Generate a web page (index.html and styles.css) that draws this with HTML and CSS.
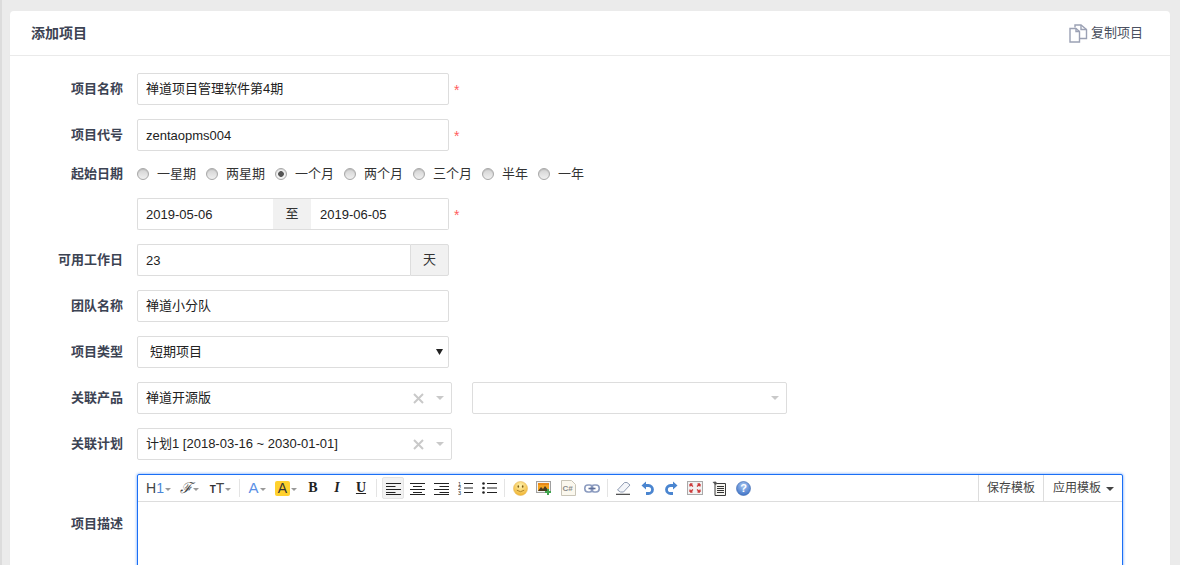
FILE: index.html
```html
<!DOCTYPE html>
<html lang="zh-CN">
<head>
<meta charset="utf-8">
<title>添加项目</title>
<link rel="stylesheet" href="styles.css">
</head>
<body>
<main class="card">
  <header class="card-head">
    <h2 class="card-title">添加项目</h2>
    <a class="copy-link" href="#">
      <svg class="copy-icon" width="19" height="19" viewBox="0 0 19 19" fill="none" stroke="#9ba1b4" stroke-width="1.400"><path d="M6 3.500V1h6l5.500 4.500v9H11"/><path d="M12 1v4.500h5.500"/><path d="M1 4.500h6l3.500 3v10.500H1z" fill="#fff"/><path d="M7 4.500v3h3.500"/></svg>
      <span>复制项目</span>
    </a>
  </header>
  <form class="form">
    <div class="row">
      <label class="label">项目名称</label>
      <input class="input input-cjk w312" type="text" value="禅道项目管理软件第4期">
      <span class="req">*</span>
    </div>
    <div class="row">
      <label class="label">项目代号</label>
      <input class="input w312" type="text" value="zentaopms004">
      <span class="req">*</span>
    </div>
    <div class="row row-radio">
      <label class="label">起始日期</label>
      <div class="radios">
        <label class="radio"><input type="radio" name="d"><span>一星期</span></label>
        <label class="radio"><input type="radio" name="d"><span>两星期</span></label>
        <label class="radio"><input type="radio" name="d" checked><span>一个月</span></label>
        <label class="radio"><input type="radio" name="d"><span>两个月</span></label>
        <label class="radio"><input type="radio" name="d"><span>三个月</span></label>
        <label class="radio"><input type="radio" name="d"><span>半年</span></label>
        <label class="radio"><input type="radio" name="d"><span>一年</span></label>
      </div>
    </div>
    <div class="row">
      <span class="label"></span>
      <div class="group w312">
        <input class="input grow" type="text" value="2019-05-06">
        <span class="addon date-addon">至</span>
        <input class="input grow" type="text" value="2019-06-05">
      </div>
      <span class="req">*</span>
    </div>
    <div class="row">
      <label class="label">可用工作日</label>
      <div class="group w312">
        <input class="input grow" type="text" value="23">
        <span class="addon day-addon">天</span>
      </div>
    </div>
    <div class="row">
      <label class="label">团队名称</label>
      <input class="input input-cjk w312" type="text" value="禅道小分队">
    </div>
    <div class="row">
      <label class="label">项目类型</label>
      <div class="select-wrap w312">
        <select class="select"><option>短期项目</option></select>
        <svg class="select-arrow" width="7" height="7" viewBox="0 0 7 7"><path d="M0 1h7L3.500 7z" fill="#222"/></svg>
      </div>
    </div>
    <div class="row">
      <label class="label">关联产品</label>
      <div class="chosen">
        <span class="chosen-text">禅道开源版</span>
        <svg class="chosen-x" width="11" height="11" viewBox="0 0 11 11" stroke="#c9c9c9" stroke-width="2"><path d="M1 1l9 9M10 1l-9 9"/></svg>
        <span class="chosen-caret"></span>
      </div>
      <div class="chosen chosen-second">
        <span class="chosen-text"></span>
        <span class="chosen-caret"></span>
      </div>
    </div>
    <div class="row">
      <label class="label">关联计划</label>
      <div class="chosen">
        <span class="chosen-text">计划1 [2018-03-16 ~ 2030-01-01]</span>
        <svg class="chosen-x" width="11" height="11" viewBox="0 0 11 11" stroke="#c9c9c9" stroke-width="2"><path d="M1 1l9 9M10 1l-9 9"/></svg>
        <span class="chosen-caret"></span>
      </div>
    </div>
    <div class="row">
      <label class="label">项目描述</label>
      <div class="editor">
        <div class="toolbar">
          <span class="tb tb-31"><span class="t-h">H<span class="t-blue">1</span></span><i class="drop"></i></span>
          <span class="tb tb-31"><span class="t-f">ℱ</span><i class="drop"></i></span>
          <span class="tb tb-31"><span class="t-small">T</span><span class="t-big">T</span><i class="drop"></i></span>
          <span class="sep"></span>
          <span class="tb tb-28"><span class="t-a">A</span><i class="drop"></i></span>
          <span class="tb tb-30"><span class="t-hl">A</span><i class="drop"></i></span>
          <span class="tb t-b">B</span>
          <span class="tb t-i">I</span>
          <span class="tb t-u">U</span>
          <span class="sep sep-after"></span>
          <span class="tb active"><svg width="15" height="13" viewBox="0 0 15 13" stroke="#222" stroke-width="1.100"><path d="M0 1.500h15M0 4.500h9.500M0 7.500h15M0 10.500h9.500M0 12.500h15" /></svg></span>
          <span class="tb"><svg width="15" height="13" viewBox="0 0 15 13" stroke="#222" stroke-width="1.100"><path d="M0 1.500h15M3 4.500h9M0 7.500h15M3 10.500h9M0 12.500h15"/></svg></span>
          <span class="tb"><svg width="15" height="13" viewBox="0 0 15 13" stroke="#222" stroke-width="1.100"><path d="M0 1.500h15M5.500 4.500H15M0 7.500h15M5.500 10.500H15M0 12.500h15"/></svg></span>
          <span class="tb"><svg width="15" height="14" viewBox="0 0 15 14" stroke="#222" stroke-width="1.100" fill="#222"><path d="M6 2.500h9M6 7h9M6 11.500h9"/><text x="0" y="4.500" class="ol-num">1</text><text x="0" y="9" class="ol-num">2</text><text x="0" y="13.500" class="ol-num">3</text></svg></span>
          <span class="tb"><svg width="15" height="12" viewBox="0 0 15 12" stroke="#222" stroke-width="1.100"><path d="M5 1.500h10M5 6h10M5 10.500h10"/><g fill="#222" stroke="none"><circle cx="1.500" cy="1.500" r="1.300"/><circle cx="1.500" cy="6" r="1.300"/><circle cx="1.500" cy="10.500" r="1.300"/></g></svg></span>
          <span class="sep"></span>
          <span class="tb"><svg width="15" height="15" viewBox="0 0 15 15"><defs><radialGradient id="sm" cx="50%" cy="30%" r="70%"><stop offset="0" stop-color="#fff3b0"/><stop offset="1" stop-color="#f0b32e"/></radialGradient></defs><circle cx="7.500" cy="7.500" r="7" fill="url(#sm)" stroke="#e8bb5e" stroke-width=".6"/><ellipse cx="5.300" cy="5.500" rx=".8" ry="1.300" fill="#7a5a16"/><ellipse cx="9.700" cy="5.500" rx=".8" ry="1.300" fill="#7a5a16"/><path d="M3.800 9.200q3.700 3 7.400 0" fill="none" stroke="#a87c22" stroke-width=".9"/></svg></span>
          <span class="tb"><svg width="16" height="15" viewBox="0 0 16 15"><rect x=".5" y=".5" width="14" height="11" fill="#f3f3f3" stroke="#a0a0a0"/><rect x="2" y="2" width="11" height="8" fill="#f4a321"/><path d="M2 10l3-4 2 2 2-3 4 5z" fill="#4a3a20"/><rect x="2" y="2" width="11" height="2" fill="#e8891a"/><path d="M12 8v6M9 11h6" stroke="#3fa34d" stroke-width="2"/></svg></span>
          <span class="tb"><svg width="15" height="16" viewBox="0 0 15 16"><path d="M.5.500h10l4 4v11H.5z" fill="#fbf8ee" stroke="#c9c5b8"/><text x="1.500" y="11" class="code-mark">C#</text></svg></span>
          <span class="tb"><svg width="16" height="9" viewBox="0 0 16 9" fill="none" stroke="#8c9cc0" stroke-width="1.600"><rect x=".8" y="1" width="8" height="7" rx="3.200"/><rect x="7.200" y="1" width="8" height="7" rx="3.200"/><path d="M4.500 4.500h7" stroke="#5e6f99"/></svg></span>
          <span class="sep"></span>
          <span class="tb"><svg width="15" height="14" viewBox="0 0 15 14"><path d="M1.500 9l7-7.500h2.500l3 2.500-6.500 7H4.500z" fill="#f4f6fa" stroke="#8f9bb2"/><path d="M0 13.300h14" stroke="#333" stroke-width="1.100"/></svg></span>
          <span class="tb"><svg width="13" height="14" viewBox="0 0 13 14" fill="none"><path d="M5 .500L.5 4.500 5 8.500z" fill="#4a85d0"/><path d="M3 4.500h4.500a3.700 3.700 0 0 1 0 8H5" stroke="#4a85d0" stroke-width="2.800"/></svg></span>
          <span class="tb"><svg width="13" height="14" viewBox="0 0 13 14" fill="none"><path d="M8 .500l4.500 4L8 8.500z" fill="#4a85d0"/><path d="M10 4.500H5.500a3.700 3.700 0 0 0 0 8H8" stroke="#4a85d0" stroke-width="2.800"/></svg></span>
          <span class="tb"><svg width="16" height="14" viewBox="0 0 16 14"><rect x=".5" y=".5" width="15" height="13" fill="#f2f2f2" stroke="#a9a9a9"/><path d="M3 3l3 2.600M3 3v2.500M3 3h2.500M13 3l-3 2.600M13 3v2.500M13 3h-2.500M3 11l3-2.600M3 11V8.500M3 11h2.500M13 11l-3-2.600M13 11V8.500M13 11h-2.500" stroke="#cc3a3a" stroke-width="1.300" fill="none"/></svg></span>
          <span class="tb"><svg width="14" height="15" viewBox="0 0 14 15"><path d="M3 2.500h10.500v12H3z" fill="#f6f5f0" stroke="#3a3a3a"/><path d="M.5 1L3.500.5l2 2-2 1.500z" fill="#555"/><path d="M5 5.500h7M5 7.500h7M5 9.500h7M5 11.500h7" stroke="#333"/></svg></span>
          <span class="tb"><svg width="15" height="15" viewBox="0 0 15 15"><defs><radialGradient id="hp" cx="50%" cy="30%" r="70%"><stop offset="0" stop-color="#a9c7f2"/><stop offset="1" stop-color="#3f73c7"/></radialGradient></defs><circle cx="7.500" cy="7.500" r="7" fill="url(#hp)" stroke="#3a66ad" stroke-width=".6"/><text x="7.500" y="11.300" class="help-mark">?</text></svg></span>
          <span class="tool-right">
            <span class="tool-btn">保存模板</span>
            <span class="tool-btn">应用模板<i class="tool-caret"></i></span>
          </span>
        </div>
      </div>
    </div>
  </form>
</main>
</body>
</html>
```
FILE: styles.css
```css
* { box-sizing: border-box; }
html, body { margin: 0; height: 565px; overflow: hidden; }
body {
  background: #ebebeb;
  border-left: 2px solid #dcdcdc;
  padding: 11px 10px 0 8px;
  font: 13px/20px "Liberation Sans", "Noto Sans CJK SC", sans-serif;
  color: #333;
}
.card {
  background: #fff;
  border-radius: 4px;
  box-shadow: 0 1px 1px rgba(0,0,0,.04);
  padding-bottom: 40px;
}
.card-head {
  height: 45px;
  border-bottom: 1px solid #eaeaea;
  display: flex;
  align-items: center;
  justify-content: space-between;
  padding: 0 27px 0 21px;
}
.card-title { margin: 0; font-size: 14px; font-weight: bold; color: #3c4353; }
.copy-link { display: flex; align-items: center; gap: 3px; color: #4a5060; text-decoration: none; }
.copy-icon { display: block; margin-top: 1px; }
.form { padding-top: 17px; display: flex; flex-direction: column; gap: 14px; }
.row { display: flex; align-items: center; }
.row-radio { height: 19px; margin-top: -1px; margin-bottom: 1px; }
.label { width: 113px; margin-right: 14px; text-align: right; font-weight: bold; color: #3c4353; flex: none; }
.w312 { width: 312px; }
.input {
  height: 32px;
  padding: 5px 8px;
  border: 1px solid #ddd;
  border-radius: 2px;
  font: inherit;
  color: #222;
  outline: none;
  background: #fff;
}
.input-cjk { padding: 3px 8px 7px; }
.req { margin: 2px 0 0 5px; color: #ff5d5d; font-size: 14px; line-height: 20px; }
.radios { display: flex; gap: 10px; }
.radio { display: flex; align-items: center; gap: 8px; color: #333; }
.radio input {
  appearance: none;
  width: 12px;
  height: 12px;
  margin: 0;
  border: 1px solid #a8a8a8;
  border-radius: 50%;
  background: linear-gradient(#d2d2d2, #f0f0f0);
  box-shadow: inset 0 1px 1px rgba(0,0,0,.12);
}
.radio input:checked { background: radial-gradient(circle, #555 0 2.500px, #f2f2f2 3.200px); }
.group { display: flex; }
.grow { flex: 1 1 0; min-width: 0; }
.group .input:first-child { border-radius: 2px 0 0 2px; border-right: 0; }
.group .input:last-child { border-radius: 0 2px 2px 0; }
.group .addon + .input { border-left: 0; padding-left: 9px; }
.addon {
  flex: none;
  height: 32px;
  background: #f1f1f1;
  border: 1px solid #ddd;
  display: flex;
  align-items: center;
  justify-content: center;
}
.date-addon { width: 38px; border-width: 1px 0; }
.date-addon + .input { flex: 0 0 138px; }
.day-addon { width: 39px; border-radius: 0 2px 2px 0; }
.select-wrap { position: relative; }
.select {
  width: 100%;
  height: 32px;
  appearance: none;
  padding: 0 12px;
  border: 1px solid #ddd;
  border-radius: 2px;
  background: #fff;
  font: inherit;
  color: #222;
}
.select-arrow { position: absolute; right: 6px; top: 12px; }
.chosen {
  width: 315px;
  height: 32px;
  border: 1px solid #ddd;
  border-radius: 2px;
  background: #fff;
  display: flex;
  align-items: center;
  padding: 0 8px;
  color: #222;
}
.chosen-second { margin-left: 20px; }
.chosen-text { flex: 1; white-space: nowrap; }
.chosen-x { display: block; margin-right: 12px; }
.chosen-caret {
  width: 0;
  height: 0;
  margin-right: -1px;
  border: 4px solid transparent;
  border-top: 4px solid #c9c9c9;
  border-bottom: 0;
}
.editor {
  width: 986px;
  height: 100px;
  border: 1px solid #1a6ff5;
  border-radius: 2px;
  box-shadow: 0 0 3px rgba(26,111,245,.7);
  background: #fff;
}
.toolbar {
  height: 27px;
  border-bottom: 1px solid #ddd;
  display: flex;
  align-items: center;
  padding-left: 5px;
  color: #333;
}
.tb {
  flex: none;
  width: 24px;
  height: 22px;
  display: flex;
  align-items: center;
  justify-content: center;
  gap: 1px;
}
.tb svg { display: block; }
.tb-31 { width: 31px; }
.tb-28 { width: 28px; }
.tb-30 { width: 30px; }
.sep { flex: none; width: 1px; height: 18px; margin: 0 3px; background: #e4e4e4; }
.sep-after { margin-right: 4px; }
.drop {
  width: 0;
  height: 0;
  margin-top: 2px;
  border: 3px solid transparent;
  border-top: 3px solid #999;
  border-bottom: 0;
}
.t-h { font-size: 14px; line-height: 20px; color: #444; }
.t-blue { color: #4a86d8; }
.t-f { font: italic 15px/20px "DejaVu Serif", serif; color: #444; }
.t-small { font-size: 10px; font-weight: bold; margin-top: 3px; }
.t-big { font-size: 14px; color: #444; margin-left: -1px; }
.t-a { font-size: 15px; color: #5a8fe6; }
.t-hl { width: 15px; height: 15px; background: #ffd12e; border-radius: 2px; font-size: 14px; line-height: 15px; text-align: center; color: #333; }
.t-b { font: bold 14px/20px "Liberation Serif", serif; color: #222; }
.t-i { font: italic bold 14px/20px "Liberation Serif", serif; color: #222; }
.t-u { font: bold 14px/20px "Liberation Serif", serif; color: #222; text-decoration: underline; }
.active { background: #f2f2f2; border: 1px solid #e4e4e4; border-radius: 2px; width: 22px; margin: 0 1px; }
.ol-num { font: 5.500px "Liberation Sans", sans-serif; stroke: none; }
.code-mark { font: bold 8px "Liberation Sans", sans-serif; fill: #8a8a8a; }
.help-mark { font: bold 11px "Liberation Sans", sans-serif; fill: #fff; text-anchor: middle; }
.tool-right { margin-left: auto; display: flex; height: 100%; }
.tool-btn { display: flex; align-items: center; padding: 0 8px; border-left: 1px solid #ddd; color: #444; font-size: 12px; }
.tool-btn + .tool-btn { padding: 0 8px 0 9px; }
.tool-caret {
  width: 0;
  height: 0;
  margin: 1px 0 0 5px;
  border: 4px solid transparent;
  border-top: 4px solid #444;
  border-bottom: 0;
}
```
